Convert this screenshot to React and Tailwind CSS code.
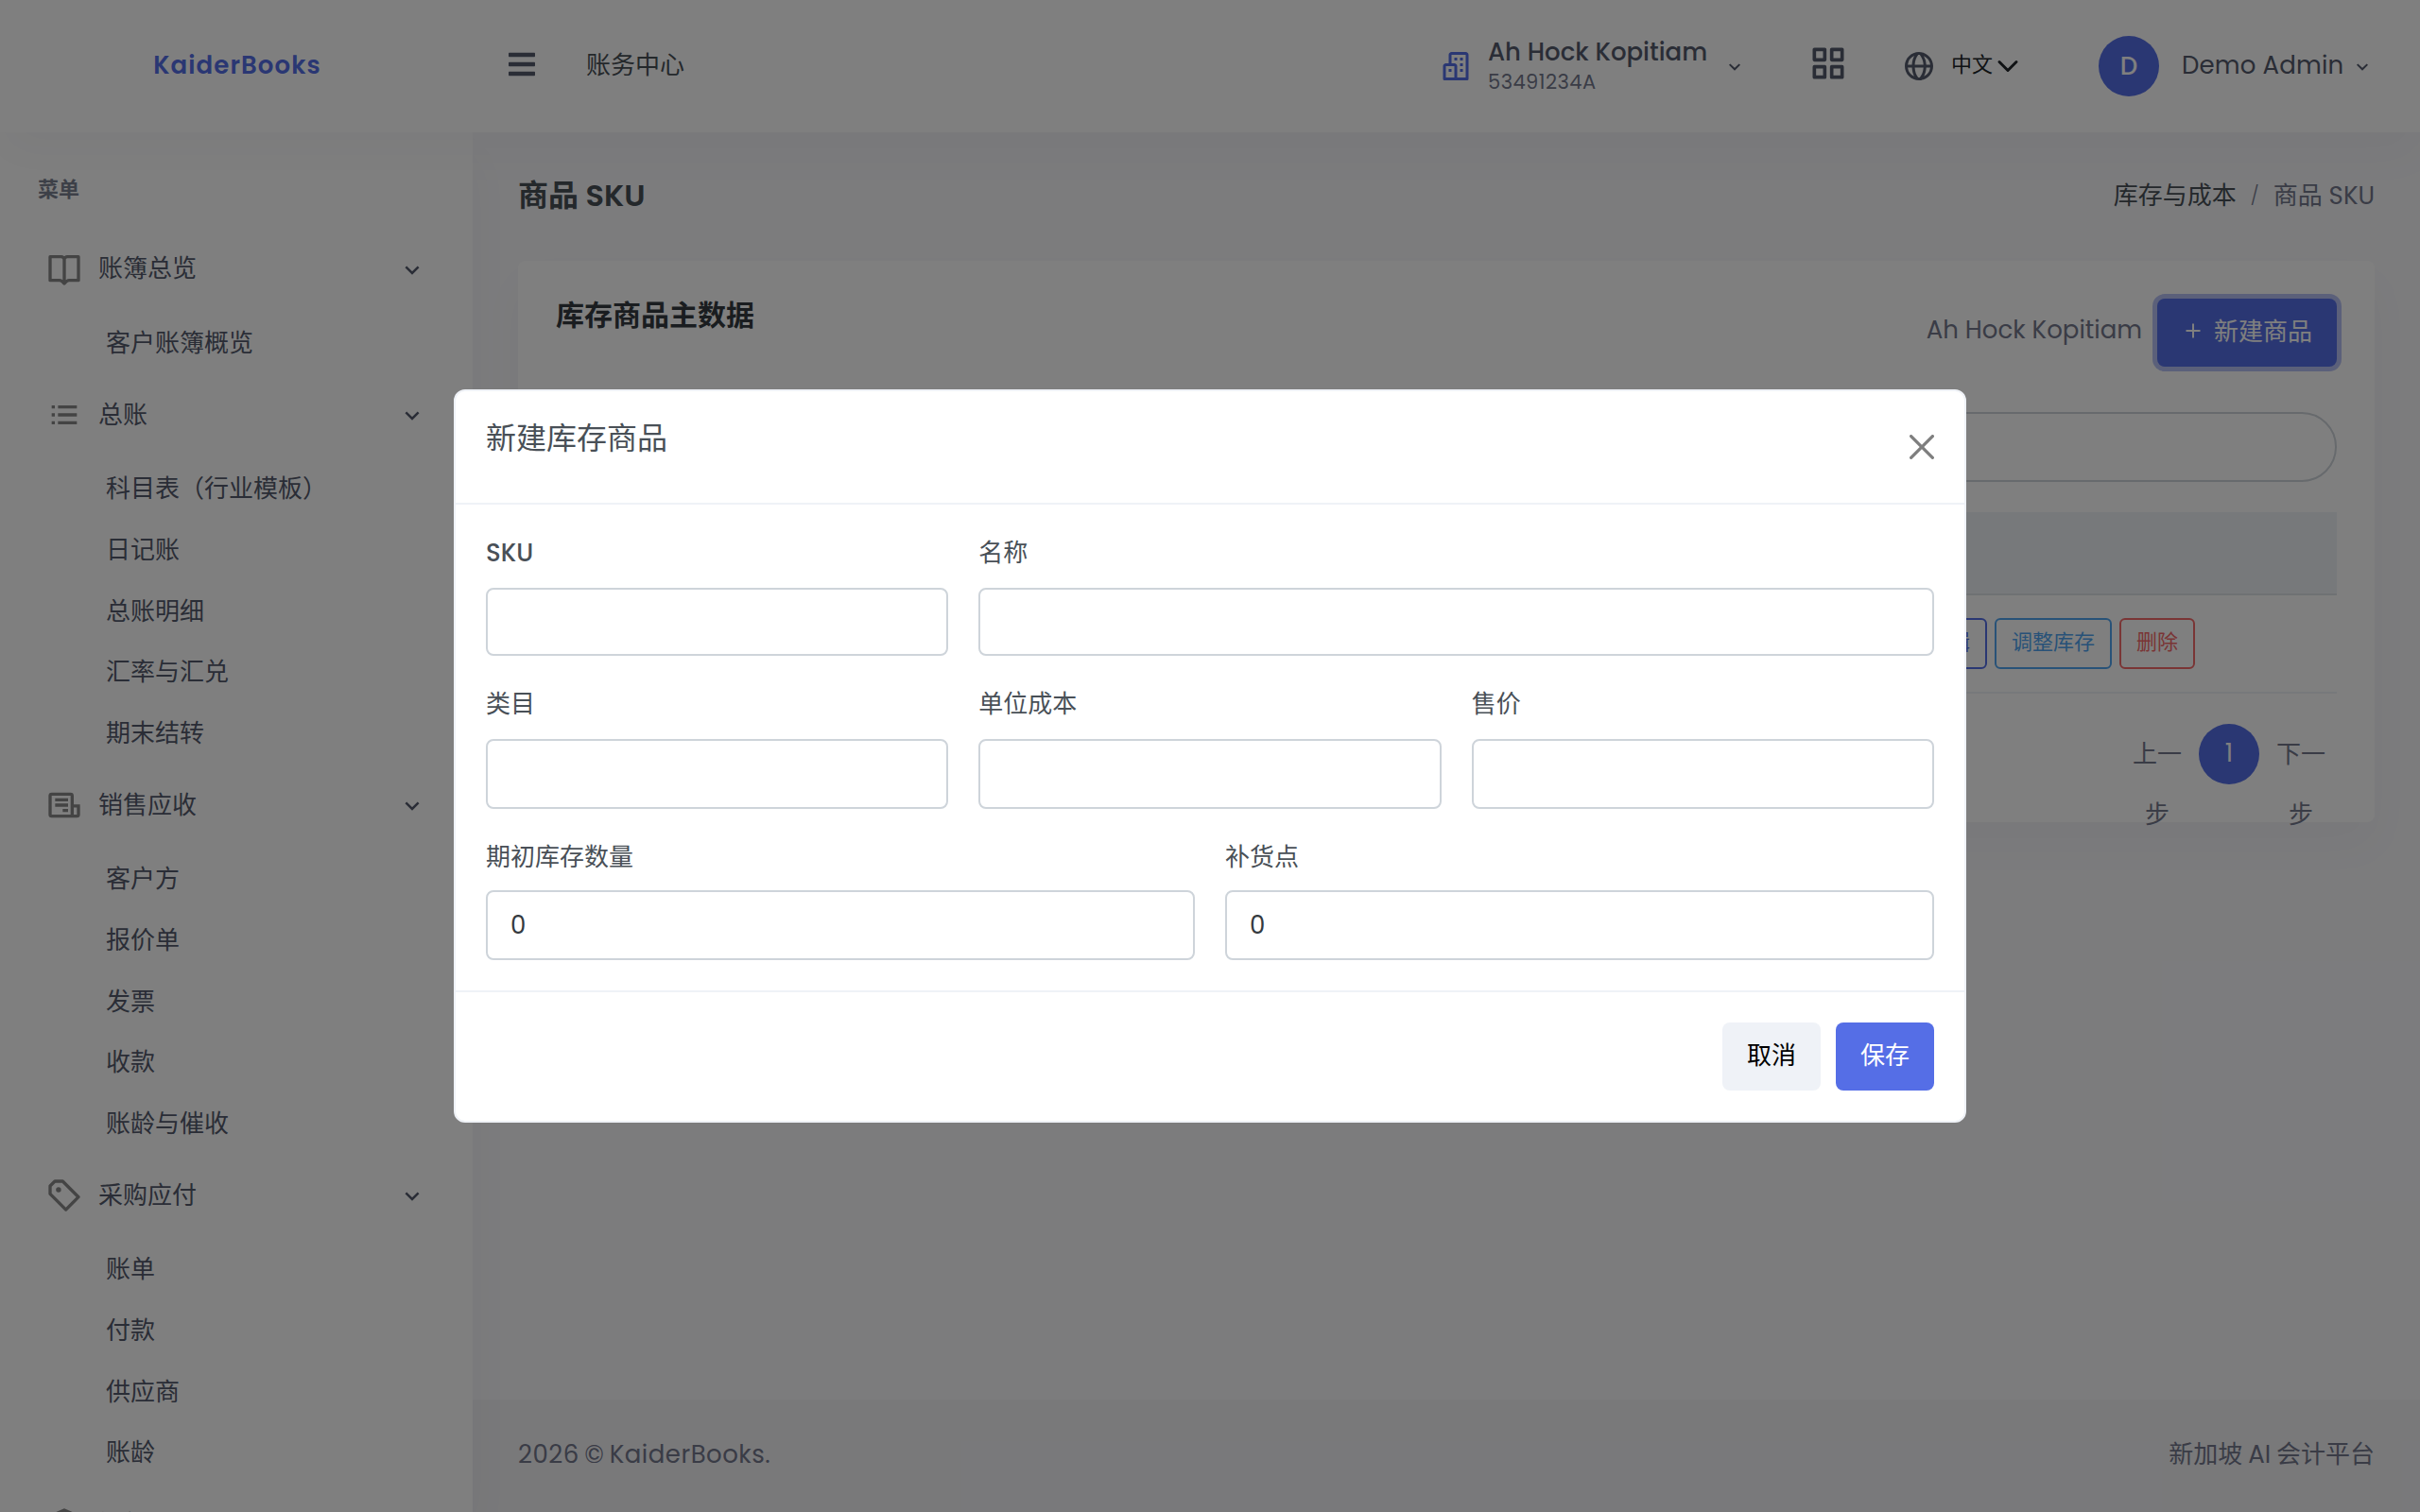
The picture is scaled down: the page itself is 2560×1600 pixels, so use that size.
import { BiBookOpen, BiListUl, BiBuildings, BiGlobe, BiGridAlt, BiCube } from "react-icons/bi";
import { FaBars } from "react-icons/fa";

function InvoiceIcon({ className }) {
  return (
    <svg viewBox="0 0 24 24" className={className} fill="none" stroke="currentColor" strokeWidth="2">
      <path d="M17 19H4a1 1 0 0 1-1-1V6a1 1 0 0 1 1-1h12a1 1 0 0 1 1 1v13h3a1 1 0 0 0 1-1v-5.5h-4" />
      <path d="M6.2 8.6h8.2M6.2 12h8.2M11 15.4h3.4" />
    </svg>
  );
}

function TagIcon({ className }) {
  return (
    <svg viewBox="0 0 24 24" className={className} fill="currentColor">
      <path d="M11.707 2.293A.997.997 0 0 0 11 2H6a.997.997 0 0 0-.707.293l-3 3A.996.996 0 0 0 2 6v5c0 .266.105.52.293.707l10 10a.997.997 0 0 0 1.414 0l8-8a.999.999 0 0 0 0-1.414l-10-10zM13 19.586l-9-9V6.414L6.414 4h4.172l9 9L13 19.586z" />
      <circle cx="8.353" cy="8.353" r="1.647" />
    </svg>
  );
}

const menu = [
  { icon: BiBookOpen, title: "账簿总览", items: ["客户账簿概览"] },
  { icon: BiListUl, title: "总账", items: ["科目表（行业模板）", "日记账", "总账明细", "汇率与汇兑", "期末结转"] },
  { icon: InvoiceIcon, title: "销售应收", items: ["客户方", "报价单", "发票", "收款", "账龄与催收"] },
  { icon: TagIcon, title: "采购应付", items: ["账单", "付款", "供应商", "账龄"] },
  { icon: BiCube, title: "银行", items: [] },
];

function Chevron({ className }) {
  return (
    <svg viewBox="0 0 24 24" className={className} fill="none" stroke="currentColor" strokeWidth="2">
      <path d="M6.7 9.1 12 14.3l5.3-5.2" />
    </svg>
  );
}

function Header() {
  return (
    <header className="relative z-20 flex h-[140px] shrink-0 items-center bg-white shadow-[0_24px_48px_rgba(18,38,63,0.03)]">
      <div className="w-[502px] pb-px text-center text-[26px] font-semibold tracking-[1.1px] text-[#556ee6]">KaiderBooks</div>
      <FaBars className="mb-[4px] ml-[34px] h-8 w-8 text-[#555b6d]" />
      <div className="ml-[52px] pb-[2px] text-[26px] text-[#495057]">账务中心</div>
      <div className="ml-auto flex items-center">
        <BiBuildings className="size-9 text-[#556ee6]" />
        <div className="ml-4 w-[249px] pt-[2px] whitespace-nowrap">
          <div className="text-[26px] leading-8 font-medium text-[#555b6d]">Ah Hock Kopitiam</div>
          <div className="text-[21px] leading-8 tracking-[0.45px] text-[#74788d]">53491234A</div>
        </div>
        <Chevron className="mt-[2px] size-6 text-[#555b6d]" />
        <BiGridAlt className="mb-[6px] ml-[65px] size-11 text-[#555b6d]" />
        <BiGlobe className="ml-14 size-9 text-[#555b6d]" />
        <span className="ml-4 w-[44px] pb-[3px] text-[22px] text-[#212529]">中文</span>
        <svg viewBox="0 0 16 16" className="ml-1 size-6 text-[#212529]" fill="none" stroke="currentColor" strokeWidth="2" strokeLinecap="round" strokeLinejoin="round">
          <path d="m2 5 6 6 6-6" />
        </svg>
        <div className="ml-[84px] flex size-16 items-center justify-center rounded-full bg-[#556ee6] text-[26px] font-medium text-white">D</div>
        <span className="ml-[24px] w-[179px] pb-px text-[26px] tracking-[0.15px] whitespace-nowrap text-[#555b6d]">Demo Admin</span>
        <Chevron className="mt-[2px] mr-[49px] size-6 text-[#555b6d]" />
      </div>
    </header>
  );
}

function Sidebar() {
  return (
    <aside className="w-[500px] shrink-0 overflow-hidden bg-white text-[#545a6d]">
      <div className="flex h-[107px] items-center pt-[14px] pl-10 text-[22px] font-semibold text-[#7b8190]">菜单</div>
      {menu.map((group) => (
        <section key={group.title} className="mb-[6px]">
          <div className="mb-2 flex h-[76px] items-center pl-[48px] text-[26px]">
            <group.icon className="mr-4 mb-px size-10 text-[#888888]" />
            <span className="pb-px">{group.title}</span>
            <Chevron className="mt-px mr-[49px] ml-auto size-[30px]" />
          </div>
          {group.items.map((item) => (
            <div key={item} className="flex h-[64.6px] items-center pl-[112px] text-[26px]">{item}</div>
          ))}
        </section>
      ))}
    </aside>
  );
}

function Content() {
  return (
    <main className="flex min-w-0 flex-1 flex-col bg-[#f8f8fb]">
      <div className="flex h-[136px] items-center justify-between px-12 pb-[2px]">
        <h1 className="pb-px text-[32px] font-semibold text-[#495057]">商品 SKU</h1>
        <div className="flex items-center text-[26px] text-[#74788d]">
          <span className="text-[#495057]">库存与成本</span>
          <span className="w-[39px] text-center text-[20px] font-light">/</span>
          <span>商品 SKU</span>
        </div>
      </div>
      <section className="mx-12 h-[594px] rounded-lg bg-white px-10 shadow-[0_24px_48px_rgba(18,38,63,0.03)]">
        <div className="flex h-[160px] justify-between pt-10">
          <h2 className="text-[30px] leading-[36px] font-semibold text-[#343a40]">库存商品主数据</h2>
          <div className="flex h-[72px] items-center text-[26px] text-[#74788d]">
            <span className="pb-[6px]">Ah Hock Kopitiam</span>
            <button className="ml-4 flex h-[72px] w-[190px] items-center rounded-lg bg-[#556ee6] pl-[30px] text-white ring-[5px] ring-[#6f84ea]/50">
              <svg viewBox="0 0 16 16" className="mr-[14px] mb-1 size-4" fill="none" stroke="currentColor" strokeWidth="2">
                <path d="M8 .5v15M.5 8h15" />
              </svg>
              <span className="pb-[2px]">新建商品</span>
            </button>
          </div>
        </div>
        <div className="h-[74px] rounded-full border-2 border-[#ced4da]" />
        <div className="mt-8 h-[88px] border-b-2 border-[#dfe2e6] bg-[#eff2f7]" />
        <div className="flex h-[104px] items-center justify-end border-b-2 border-[#eff2f7] pr-[150px] text-[22px]">
          <span className="flex h-[54px] items-center rounded-md border-2 border-[#556ee6] px-4 pb-[3px] text-[#556ee6]">编辑</span>
          <span className="ml-2 flex h-[54px] items-center rounded-md border-2 border-[#50a5f1] px-4 pb-[3px] text-[#50a5f1]">调整库存</span>
          <span className="ml-2 flex h-[54px] items-center rounded-md border-2 border-[#f46a6a] px-4 pb-[3px] text-[#f46a6a]">删除</span>
        </div>
        <div className="mt-8 flex justify-end text-center text-[26px] leading-[64px] text-[#74788d]">
          <div className="w-[76px] px-3">上一步</div>
          <div className="mx-[6px] size-16 rounded-full bg-[#556ee6] leading-[62px] text-white">1</div>
          <div className="w-[76px] px-3">下一步</div>
        </div>
      </section>
      <footer className="mt-auto flex h-[119px] items-center justify-between bg-[#f2f2f5] px-12 pb-[2px] text-[26px] text-[#74788d]">
        <span className="tracking-[0.5px] [word-spacing:-2px]">2026 © KaiderBooks.</span>
        <span className="[word-spacing:-1px]">新加坡 AI 会计平台</span>
      </footer>
    </main>
  );
}

function Field({ label, value, className, labelClass = "mb-[17px]", boxClass = "h-[74px]" }) {
  return (
    <label className={className}>
      <span className={`block text-[26px] leading-[39px] ${labelClass}`}>{label}</span>
      <span className={`flex items-center rounded-lg border-2 border-[#ced4da] px-6 text-[26px] text-[#343a40] ${boxClass}`}>{value}</span>
    </label>
  );
}

function Modal() {
  return (
    <div className="absolute inset-0 z-30 flex items-start justify-center bg-black/50 pt-[412px]">
      <div className="h-[776px] w-[1600px] rounded-xl border-2 border-[#eff2f7] bg-white text-[#495057]">
        <div className="flex h-[120px] items-center justify-between border-b-2 border-[#eff2f7] px-8">
          <h3 className="mb-[18px] text-[32px]">新建库存商品</h3>
          <svg viewBox="0 0 16 16" className="size-[26px] opacity-50" fill="#000">
            <path d="M.293.293a1 1 0 0 1 1.414 0L8 6.586 14.293.293a1 1 0 1 1 1.414 1.414L9.414 8l6.293 6.293a1 1 0 0 1-1.414 1.414L8 9.414l-6.293 6.293a1 1 0 0 1-1.414-1.414L6.586 8 .293 1.707a1 1 0 0 1 0-1.414z" />
          </svg>
        </div>
        <div className="grid h-[516px] grid-cols-6 grid-rows-[160px_161px_auto] content-start gap-x-8 border-b-2 border-[#eff2f7] px-8 pt-8">
          <Field label="SKU" className="col-span-2" labelClass="mb-[17px] font-medium" boxClass="h-[72px]" />
          <Field label="名称" className="col-span-4" boxClass="h-[72px]" />
          <Field label="类目" className="col-span-2" />
          <Field label="单位成本" className="col-span-2" />
          <Field label="售价" className="col-span-2" />
          <Field label="期初库存数量" value="0" className="col-span-3" labelClass="pt-px mb-[15px]" />
          <Field label="补货点" value="0" className="col-span-3" labelClass="pt-px mb-[15px]" />
        </div>
        <div className="flex h-[136px] items-center justify-end gap-4 px-8 text-[26px]">
          <button className="h-[72px] w-[104px] rounded-lg bg-[#eff2f7] pb-px text-black">取消</button>
          <button className="h-[72px] w-[104px] rounded-lg bg-[#556ee6] pb-px text-white">保存</button>
        </div>
      </div>
    </div>
  );
}

export default function App() {
  return (
    <div className="relative flex h-[1600px] w-[2560px] flex-col overflow-hidden font-[Poppins,Inter,'Noto_Sans_CJK_SC',sans-serif]">
      <Header />
      <div className="flex min-h-0 flex-1">
        <div className="relative z-10 flex shadow-[0_24px_48px_rgba(18,38,63,0.03)]">
          <Sidebar />
        </div>
        <Content />
      </div>
      <Modal />
    </div>
  );
}
